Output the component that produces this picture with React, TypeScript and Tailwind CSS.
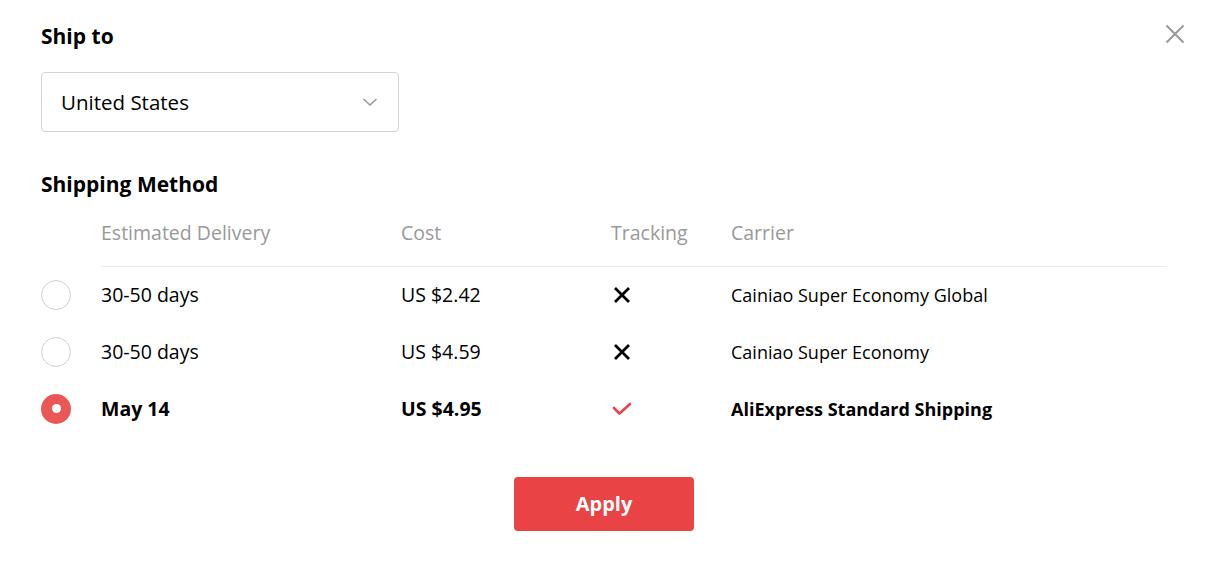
type ShippingOption = {
  delivery: string;
  cost: string;
  tracking: boolean;
  carrier: string;
  selected?: boolean;
};

const options: ShippingOption[] = [
  { delivery: "30-50 days", cost: "US $2.42", tracking: false, carrier: "Cainiao Super Economy Global" },
  { delivery: "30-50 days", cost: "US $4.59", tracking: false, carrier: "Cainiao Super Economy" },
  { delivery: "May 14", cost: "US $4.95", tracking: true, carrier: "AliExpress Standard Shipping", selected: true },
];

const CrossIcon = () => (
  <svg width="18" height="18" viewBox="0 0 18 18" fill="none" stroke="#000" strokeWidth="2.8" strokeLinecap="butt">
    <path d="M2 2 L16 16 M16 2 L2 16" />
  </svg>
);

const CheckIcon = () => (
  <svg width="20" height="14" viewBox="0 0 20 14" fill="none" stroke="#e8424a" strokeWidth="2.6" strokeLinecap="round" strokeLinejoin="round">
    <path d="M2 6 L7.5 11.5 L18 2" />
  </svg>
);

const App = () => {
  return (
    <div className="relative h-[574px] w-[1208px] overflow-hidden bg-white px-[41px] pt-[22px] font-['Open_Sans',sans-serif] text-black">
      <button aria-label="Close" className="absolute right-[23px] top-[24px] text-[#999]">
        <svg width="20" height="20" viewBox="0 0 20 20" fill="none" stroke="currentColor" strokeWidth="2">
          <path d="M1.5 1.5 L18.5 18.5 M18.5 1.5 L1.5 18.5" />
        </svg>
      </button>

      <h2 className="text-[21px] font-bold leading-[28px]">Ship to</h2>

      <div className="mt-[22px] flex h-[60px] w-[358px] items-center justify-between rounded-[4px] border border-[#d3d3d3] pl-[19px] pr-[20px]">
        <span className="text-[20.5px] leading-[28px]">United States</span>
        <svg width="16" height="10" viewBox="0 0 16 10" fill="none" stroke="#999" strokeWidth="1.6">
          <path d="M1.5 2 L8 8 L14.5 2" />
        </svg>
      </div>

      <h2 className="mt-[38px] text-[21px] font-bold leading-[28px]">Shipping Method</h2>

      <div className="mt-[22px] ml-[60px] grid grid-cols-[300px_210px_120px_1fr] border-b border-[#ebebeb] pb-[20px] text-[19.5px] leading-[26px] text-[#999]">
        <span>Estimated Delivery</span>
        <span>Cost</span>
        <span>Tracking</span>
        <span>Carrier</span>
      </div>

      <div className="flex flex-col">
        {options.map((o, i) => (
          <div
            key={i}
            className={`grid h-[57px] grid-cols-[60px_300px_210px_120px_1fr] items-center pb-[2px] text-[19.5px] leading-[26px] ${o.selected ? "font-bold" : ""}`}
          >
            <span
              className={
                o.selected
                  ? "flex h-[30px] w-[30px] items-center justify-center rounded-full bg-[#e95757]"
                  : "h-[30px] w-[30px] rounded-full border border-[#d0d0d0]"
              }
            >
              {o.selected && <span className="h-[9px] w-[9px] rounded-full bg-white" />}
            </span>
            <span>{o.delivery}</span>
            <span>{o.cost}</span>
            <span className="flex w-[22px] justify-center">{o.tracking ? <CheckIcon /> : <CrossIcon />}</span>
            <span className="text-[18px]">{o.carrier}</span>
          </div>
        ))}
      </div>

      <div className="mt-[39px] flex justify-center">
        <button className="h-[54px] w-[180px] rounded-[4px] bg-[#e94346] text-[20px] font-bold text-white">Apply</button>
      </div>
    </div>
  );
};

export default App;
